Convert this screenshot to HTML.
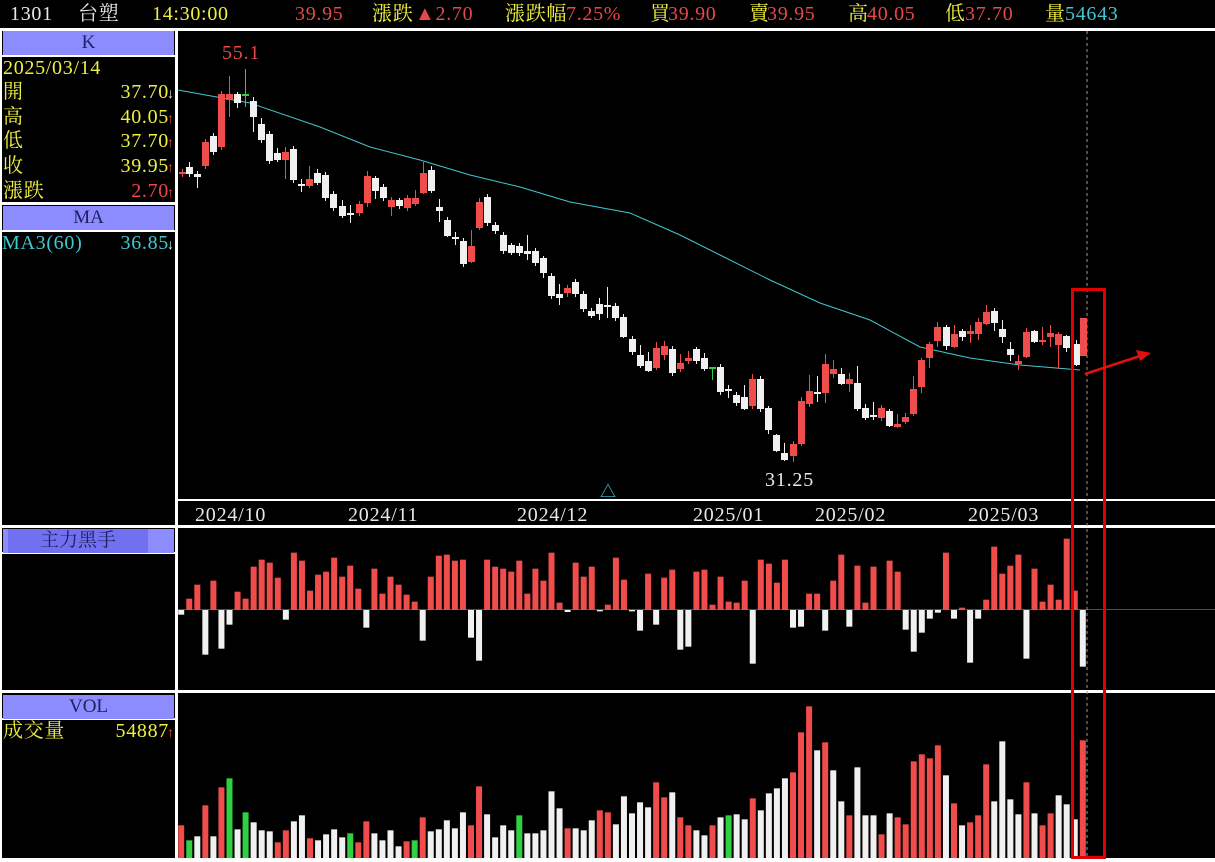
<!DOCTYPE html>
<html><head><meta charset="utf-8"><style>
*{margin:0;padding:0}
body{width:1215px;height:862px;background:#000;overflow:hidden;position:relative;font-family:"Liberation Serif","Noto Serif CJK TC","Noto Sans CJK TC",serif;}
.t{position:absolute;font-size:20px;line-height:22px;white-space:nowrap;letter-spacing:0.7px}
.y{color:#f0f040}.r{color:#e84848}.w{color:#e8e8e8}.c{color:#40c8d0}
.box{position:absolute;background:#8c8cff;color:#202060;text-align:center;font-size:19px;line-height:24px}
.n{position:absolute;right:6px;top:0}
</style></head><body>
<div class="t w" style="left:10px;top:3px">1301</div>
<div class="t w" style="left:78px;top:3px">台塑</div>
<div class="t y" style="left:152px;top:3px">14:30:00</div>
<div class="t r" style="left:295px;top:3px">39.95</div>
<div class="t y" style="left:372px;top:3px">漲跌</div>
<div class="t r" style="left:415px;top:3px">▲2.70</div>
<div class="t y" style="left:505px;top:3px">漲跌幅</div>
<div class="t r" style="left:566px;top:3px">7.25%</div>
<div class="t y" style="left:650px;top:3px">買</div>
<div class="t r" style="left:668px;top:3px">39.90</div>
<div class="t y" style="left:749px;top:3px">賣</div>
<div class="t r" style="left:767px;top:3px">39.95</div>
<div class="t y" style="left:848px;top:3px">高</div>
<div class="t r" style="left:867px;top:3px">40.05</div>
<div class="t y" style="left:945px;top:3px">低</div>
<div class="t r" style="left:965px;top:3px">37.70</div>
<div class="t y" style="left:1045px;top:3px">量</div>
<div class="t c" style="left:1065px;top:3px">54643</div>

<svg id="s" width="1215" height="862" style="position:absolute;left:0;top:0">
<rect x="0" y="28" width="1215" height="3" fill="#fff"/>
<rect x="175" y="28" width="3" height="834" fill="#fff"/>
<rect x="0" y="28" width="2" height="834" fill="#fff"/>
<rect x="178" y="499" width="1037" height="2" fill="#fff"/>
<rect x="0" y="525" width="1215" height="3" fill="#fff"/>
<rect x="0" y="690" width="1215" height="3" fill="#fff"/>
<rect x="0" y="858" width="1215" height="4" fill="#fff"/>
<rect x="0" y="55" width="175" height="2" fill="#fff"/>
<rect x="0" y="202" width="175" height="3" fill="#fff"/>
<rect x="0" y="230" width="175" height="2" fill="#fff"/>
<rect x="0" y="552" width="175" height="2" fill="#fff"/>
<rect x="0" y="718" width="175" height="2" fill="#fff"/>
<rect x="178" y="609" width="1037" height="1" fill="#c02020"/>
<line x1="1087" y1="31" x2="1087" y2="858" stroke="#999" stroke-dasharray="3,3"/>
<polyline fill="none" stroke="#40c8d0" stroke-width="1" points="178,90 250,103 320,127 370,147 420,160 470,175 520,187 570,202 630,213 680,235 720,255 770,280 820,303 870,320 920,347 970,358 1020,365 1080,370"/>
<g id="g"></g>
<text x="222" y="59" fill="#e84848" font-size="20" letter-spacing="0.8" font-family="Liberation Serif">55.1</text>
<text x="765" y="486" fill="#e8e8e8" font-size="20" letter-spacing="0.8" font-family="Liberation Serif">31.25</text>
<text x="600" y="497" fill="#40c8d0" font-size="16">△</text>
<g fill="#e8e8e8" font-size="20" letter-spacing="0.8" font-family="Liberation Serif">
<text x="195" y="521">2024/10</text><text x="348" y="521">2024/11</text><text x="517" y="521">2024/12</text>
<text x="693" y="521">2025/01</text><text x="815" y="521">2025/02</text><text x="968" y="521">2025/03</text></g>
<rect x="1072.5" y="289.5" width="32" height="568" fill="none" stroke="#e00000" stroke-width="3"/>
<line x1="1085" y1="374" x2="1140" y2="356" stroke="#e01010" stroke-width="2.5"/>
<polygon points="1151,353 1136,350 1140,361" fill="#e01010"/>
</svg>

<div class="box" style="left:3px;top:31px;width:171px">K</div>
<div class="t y" style="left:3px;top:57px">2025/03/14</div>
<div class="t y" style="left:3px;top:81px;width:172px">開<span class="n">37.70</span></div>
<div class="t y" style="left:3px;top:106px;width:172px">高<span class="n">40.05</span></div>
<div class="t y" style="left:3px;top:130px;width:172px">低<span class="n">37.70</span></div>
<div class="t y" style="left:3px;top:155px;width:172px">收<span class="n">39.95</span></div>
<div class="t y" style="left:3px;top:180px;width:172px">漲跌<span class="n r">2.70</span></div>
<div class="t w" style="left:167px;top:84px;font-size:14px">↓</div>
<div class="t r" style="left:167px;top:109px;font-size:14px">↑</div>
<div class="t r" style="left:167px;top:133px;font-size:14px">↑</div>
<div class="t r" style="left:167px;top:158px;font-size:14px">↑</div>
<div class="t r" style="left:167px;top:183px;font-size:14px">↑</div>
<div class="box" style="left:3px;top:206px;width:171px">MA</div>
<div class="t c" style="left:2px;top:232px;width:173px">MA3(60)<span class="n">36.85</span></div>
<div class="t w" style="left:167px;top:235px;font-size:14px">↓</div>
<div class="box" style="left:3px;top:529px;width:171px;text-align:left"><span style="display:inline-block;background:#7070f0;width:140px;text-align:center;margin-left:5px">主力黑手</span></div>
<div class="box" style="left:3px;top:695px;width:171px">VOL</div>
<div class="t y" style="left:3px;top:720px;width:172px">成交量<span class="n">54887</span></div>
<div class="t r" style="left:167px;top:723px;font-size:14px">↑</div>

<script>
var R="#f04c4c",W="#f0f0f0",G="#30d040";
var C=[[182,172,174,'r'],[189,167,174,'w',162,177],[197,174,177,'w',171,188],[205,142,166,'r'],[213,136,152,'w'],[221,94,147,'r'],[229,94,100,'r',76,117],[237,94,103,'w',92,108],[245,94,96,'g',69,107],[253,101,117,'w',97,132],[261,124,140,'w',118,143],[269,134,161,'w'],[277,153,160,'w',148,162],[285,152,160,'r',147,179],[293,149,180,'w'],[301,184,186,'w',179,192],[309,179,186,'r',166,188],[317,173,183,'w',169,185],[325,175,198,'w'],[333,194,208,'w'],[342,206,216,'w',200,218],[350,213,215,'w',205,223],[359,204,213,'r'],[367,176,203,'r',171,207],[375,178,191,'w',176,199],[383,187,198,'w'],[391,200,207,'r',197,216],[399,200,206,'w',198,209],[407,198,208,'r'],[415,198,204,'r',190,206],[423,173,193,'r',162,194],[431,170,191,'w',166,193],[439,207,211,'w',199,222],[447,220,236,'w',217,237],[455,237,239,'w',232,245],[463,241,264,'w'],[471,246,262,'r',230,263],[479,202,228,'r',198,230],[487,197,223,'w'],[495,225,231,'w'],[503,235,251,'w'],[511,245,253,'w',243,255],[519,246,253,'w'],[527,251,254,'w',235,260],[535,251,263,'w'],[543,258,273,'w',256,278],[551,276,296,'w'],[559,294,298,'w',284,305],[567,288,293,'r',285,297],[575,282,294,'w'],[583,294,309,'w'],[591,311,316,'w',308,318],[599,304,314,'w',298,320],[607,305,307,'w',287,318],[615,306,318,'w'],[623,317,337,'w',314,338],[632,339,352,'w'],[640,355,366,'w',345,368],[648,361,371,'w',352,372],[656,348,368,'r',342,370],[664,346,355,'r',341,360],[672,349,373,'w'],[680,363,369,'r',354,372],[688,358,361,'r',351,364],[696,349,361,'w',347,364],[704,358,369,'w',353,371],[712,367,369,'g',367,380],[720,367,392,'w'],[728,389,391,'w',385,398],[736,395,403,'w'],[744,397,409,'w',385,410],[752,379,406,'r',374,409],[760,379,409,'w'],[768,408,430,'w',406,434],[776,435,451,'w',434,452],[784,453,460,'w',443,461],[793,444,456,'r',441,462],[801,401,444,'r',397,446],[809,391,404,'r',375,407],[817,392,394,'w',376,402],[825,364,393,'r',354,403],[833,369,374,'r',360,378],[841,374,384,'w',368,385],[849,379,384,'r',373,392],[857,383,409,'w',366,411],[865,408,418,'w',404,420],[873,415,417,'w',402,420],[881,408,418,'r',405,421],[889,411,426,'w',409,427],[897,424,427,'r',414,428],[905,417,422,'r',413,424],[913,389,414,'r',376,416],[921,360,387,'r',358,393],[929,344,358,'r',342,368],[937,327,341,'r',322,347],[946,327,346,'w',325,350],[954,334,347,'r',325,348],[962,331,337,'w',329,341],[970,331,334,'r',325,343],[978,322,334,'r',318,340],[986,312,324,'r',305,325],[994,311,323,'w',308,331],[1002,329,337,'w',320,343],[1010,349,355,'w',342,361],[1018,361,364,'r',355,370],[1026,332,357,'r',328,358],[1034,331,342,'w',330,343],[1042,340,342,'r',327,345],[1050,333,337,'r',325,347],[1058,334,345,'r',332,369],[1066,336,348,'w',335,352],[1076,344,365,'w',340,366],[1083,318,356,'r',318,356]];
var P="",col={r:R,w:W,g:G};
C.forEach(function(c){var f=col[c[3]],a=c[4]||c[1]-3,b=c[5]||c[2]+3;
P+='<rect x="'+(c[0])+'" y="'+a+'" width="1" height="'+(b-a)+'" fill="'+f+'"/>';
P+='<rect x="'+(c[0]-3)+'" y="'+c[1]+'" width="7" height="'+Math.max(1,c[2]-c[1])+'" fill="'+f+'"/>';});
var I1=[270,222,180,390,168,372,300,201,222,126,105,114,159,285,84,108,198,150,141,99,156,123,192,309,132,207,156,180,210,231,348,156,93,90,108,105,339,408,105,126,132,141,108,207,132,168,84,234,262,114,156,126,260,240,99,165,260,318,147];
var I2=[300,159,135,375,366,141,135,240,156,231,234,168,417,105,117,174,105,309,306,207,207,318,168,90,306,123,234,126,256,108,141,315,381,324,282,264,84,282,249,414,282,225,66,147,123,90,402,132,231,180,225,42,198,426];
var I=I1.concat(I2);
I.forEach(function(z,i){var x=180.7+i*8.05-2.5,h=(256-z)/3;
if(h>=0)P+='<rect x="'+x+'" y="'+(610-h)+'" width="6" height="'+h+'" fill="'+R+'"/>';
else P+='<rect x="'+x+'" y="610" width="6" height="'+(-h)+'" fill="'+W+'"/>';});
var V1="r900 g945 w933 r840 w933 r786 g759 w912 g861 w891 w915 w918 r951 r915 w888 w870 r939 w945 w927 w912 w936 g924 r951 r888 w924 w945 w915 w963 r948 g945 r876 w918 w912 w885 w909 w861 r900 r783 w867 w936 w900 w915 g870 w924 w924 w915 w798 w849 r909 w909 w915 w885 r855 r861 w897 w813 w864 w831 w846";
var V2="r771 r816 w801 r876 r900 w915 w930 r900 w876 g870 w867 w882 r819 w855 w804 w789 w759 r741 r621 r543 w675 r651 w735 w828 r870 w726 w870 w870 r927 w864 r876 r897 r708 r687 r699 r660 w750 r834 w900 r891 r870 r717 w828 w648 w822 w867 r771 w864 r900 r864 w810 w837 w882 r645";
(V1+" "+V2).split(" ").forEach(function(s,i){var f=col[s[0]],h=(998-(+s.slice(1)))/3,x=180.7+i*8.05-2.5;
P+='<rect x="'+x+'" y="'+(858-h)+'" width="6" height="'+h+'" fill="'+f+'"/>';});
document.getElementById("g").innerHTML=P;
</script>
</body></html>
